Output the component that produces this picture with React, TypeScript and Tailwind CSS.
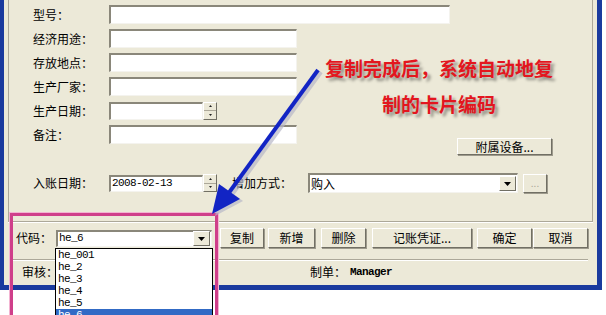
const raised =
  "border border-t-white border-l-white border-b-[#716f64] border-r-[#716f64] shadow-[1px_1px_0_#9d9a8c] bg-[#ece9d8]";
const sunken =
  "bg-white border-t-2 border-l-2 border-t-[#8a877a] border-l-[#8a877a] border-b border-r border-b-[#f4f3ee] border-r-[#f4f3ee]";
const mono = "font-['Liberation_Mono',monospace] text-[11px] tracking-[-0.6px]";

const Spinner = () => (
  <div className="flex h-[18px] w-[14px] flex-col border border-t-white border-l-white border-b-[#716f64] border-r-[#716f64] bg-[#ece9d8]">
    <div className="flex flex-1 items-center justify-center border-b border-[#aca899]">
      <svg width="3" height="2">
        <path d="M0 2h3L1.5 0z" fill="#222" />
      </svg>
    </div>
    <div className="flex flex-1 items-center justify-center">
      <svg width="3" height="2">
        <path d="M0 0h3L1.5 2z" fill="#222" />
      </svg>
    </div>
  </div>
);

const DropArrow = () => (
  <div className="flex h-[15px] w-[17px] items-center justify-center border border-t-white border-l-white border-b-[#716f64] border-r-[#716f64] bg-[#ece9d8]">
    <svg width="7" height="4">
      <path d="M0 0h7L3.5 4z" fill="#000" />
    </svg>
  </div>
);

type Row = { label: string; width: string };

const rows: Row[] = [
  { label: "型号：", width: "w-[341px]" },
  { label: "经济用途：", width: "w-[188px]" },
  { label: "存放地点：", width: "w-[188px]" },
  { label: "生产厂家：", width: "w-[188px]" },
];

const codes = ["he_001", "he_2", "he_3", "he_4", "he_5", "he_6"];

export default function App() {
  return (
    <div className="relative h-[315px] w-[606px] overflow-hidden bg-white font-['Noto_Sans_CJK_SC','Noto_Sans',sans-serif] text-[12px] text-black">
      <div className="flex h-[290px] w-[602px] flex-col border-b-[5px] border-l-4 border-r-[5px] border-[#1a3a9e] bg-[#ece9d8]">
        {/* form panel */}
        <div className="ml-[4px] flex h-[222px] w-[585px] flex-col border-x border-b border-[#aca899] pl-[24px] pt-[5px] shadow-[0_1px_0_#fff]">
          <div className="flex flex-col gap-[5px]">
            {rows.map((r) => (
              <div key={r.label} className="flex h-[19px] items-center">
                <span className="w-[76px] leading-none">{r.label}</span>
                <div className={`h-[19px] ${r.width} ${sunken}`} />
              </div>
            ))}
            <div className="flex h-[19px] items-center">
              <span className="w-[76px] leading-none">生产日期：</span>
              <div className={`h-[18px] w-[94px] ${sunken}`} />
              <Spinner />
            </div>
            <div className="flex h-[19px] items-center">
              <span className="w-[76px] leading-none">备注：</span>
              <div className={`h-[19px] w-[188px] ${sunken}`} />
            </div>
          </div>

          <div className="mt-[-6px] flex justify-end pr-[40px]">
            <button className={`flex h-[17px] w-[95px] items-center justify-center text-[12px] leading-none ${raised}`}>
              附属设备...
            </button>
          </div>

          <div className="mt-[18px] flex h-[20px] items-center">
            <span className="w-[76px] leading-none">入账日期：</span>
            <div className={`flex h-[17px] w-[94px] items-center pl-[1px] ${sunken}`}>
              <span className={mono}>2008-02-13</span>
            </div>
            <Spinner />
            <span className="ml-[15px] w-[76px] leading-none">增加方式：</span>
            <div className={`flex h-[20px] w-[210px] items-center justify-between pr-[1px] ${sunken}`}>
              <span className="pl-[1px] leading-none">购入</span>
              <DropArrow />
            </div>
            <button className={`ml-[5px] flex h-[19px] w-[24px] items-center justify-center text-[10px] leading-none text-[#aca899] ${raised}`}>
              ...
            </button>
          </div>
        </div>

        {/* toolbar */}
        <div className="mt-[6px] flex h-[20px] items-center pl-[12px]">
          <span className="w-[40px] leading-none">代码：</span>
          <div className={`flex h-[17px] w-[156px] items-center justify-between pr-[1px] ${sunken}`}>
            <span className={`pl-[1px] leading-none ${mono}`}>he_6</span>
            <DropArrow />
          </div>
          <button className={`ml-[8px] h-[20px] w-[44px] leading-none ${raised}`}>复制</button>
          <button className={`ml-[4px] h-[20px] w-[47px] leading-none ${raised}`}>新增</button>
          <button className={`ml-[6px] h-[20px] w-[45px] leading-none ${raised}`}>删除</button>
          <button className={`ml-[6px] h-[20px] w-[100px] leading-none ${raised}`}>记账凭证...</button>
          <button className={`ml-[5px] h-[20px] w-[55px] leading-none ${raised}`}>确定</button>
          <button className={`ml-[1px] h-[20px] w-[55px] leading-none ${raised}`}>取消</button>
        </div>

        <div className="ml-[8px] mt-[11px] w-[576px] border-t border-b border-t-[#aca899] border-b-white" />

        <div className="mt-[5px] flex h-[12px] items-center pl-[18px]">
          <span className="w-[288px] leading-none">审核：</span>
          <span className="leading-none">制单：</span>
          <span className={`ml-[4px] leading-none font-bold ${mono}`}>Manager</span>
        </div>
      </div>

      {/* open dropdown list */}
      <div className="absolute left-[55px] top-[248px] h-[80px] w-[158px] border border-black bg-white">
        {codes.map((c) => (
          <div
            key={c}
            className={`h-[12px] pl-[2px] leading-[12px] ${mono} ${c === "he_6" ? "bg-[#316ac5] text-white" : ""}`}
          >
            {c}
          </div>
        ))}
      </div>

      {/* annotation: pink frame */}
      <div className="pointer-events-none absolute left-[10px] top-[213px] h-[120px] w-[208px] border-[3px] border-[#cf3f8a] shadow-[0_0_0_1px_#f3b4d2]" />

      {/* annotation: arrow */}
      <svg className="pointer-events-none absolute left-0 top-0" width="606" height="315">
        <line x1="321" y1="72" x2="231" y2="196" stroke="#b8b8c8" strokeWidth="4" opacity="0.7" />
        <polygon points="215,216 222,186 243,201" fill="#b8b8c8" opacity="0.7" />
        <line x1="318" y1="70" x2="228" y2="194" stroke="#1224c4" strokeWidth="4" />
        <polygon points="212,214 219,184 240,199" fill="#1224c4" />
      </svg>

      {/* annotation: red caption */}
      <div className="pointer-events-none absolute left-[319px] top-[50px] w-[240px] text-center text-[19px] font-bold leading-[36px] text-[#e3161e] [text-shadow:3px_3px_3px_rgba(0,0,0,0.4)]">
        <div>复制完成后，系统自动地复</div>
        <div>制的卡片编码</div>
      </div>
    </div>
  );
}
